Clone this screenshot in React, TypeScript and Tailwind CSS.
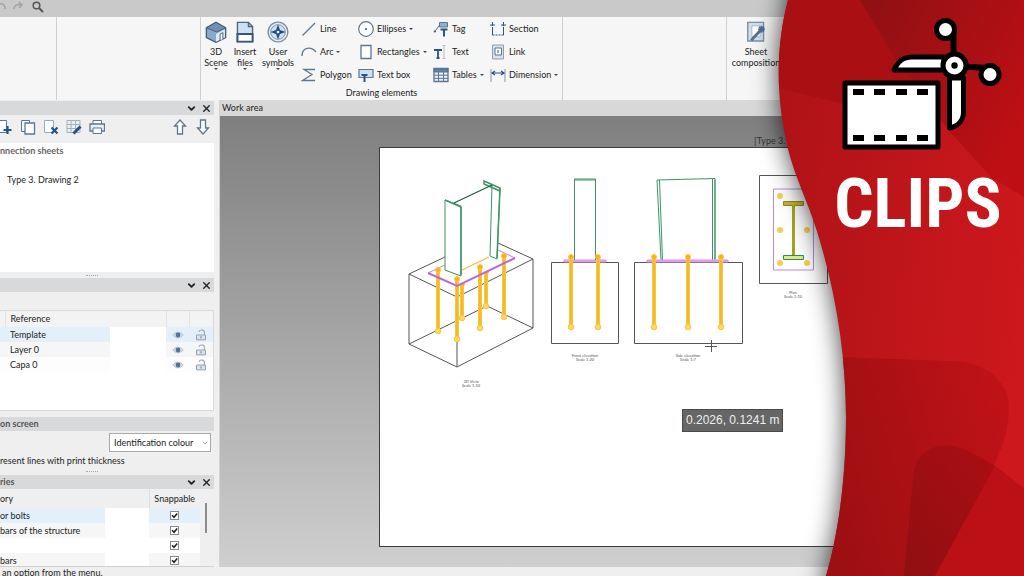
import { useState } from 'react';
import type { ReactNode } from 'react';
import { ChevronDown, X } from 'lucide-react';

const INK = '#5b7793';
const NAVY = '#24548a';
const PALE = '#cfe0f0';

function Glyph({ children, className = 'size-4' }: { children: ReactNode; className?: string }) {
  return (
    <svg viewBox="0 0 16 16" fill="none" stroke={INK} className={`shrink-0 ${className}`} aria-hidden="true">
      {children}
    </svg>
  );
}

const icons = {
  scene: (
    <Glyph className="size-[22px]">
      <path d="M1 5 8 1l7 4v7l-7 3.500L1 12Z" fill="#87a9cf" stroke="#4a5e75" />
      <path d="M1 5 8 1l7 4-6.500 3Z" fill="#6f8fb3" stroke="#4a5e75" strokeWidth=".7" />
      <path d="M8 9.500 14.500 6v6L8 15Z" fill="#dfeaf5" stroke="none" />
      <path d="M11 14V9.500l2-1V13" fill="#fff" stroke="#4a5e75" strokeWidth=".7" />
    </Glyph>
  ),
  insert: (
    <Glyph className="size-[22px]">
      <path d="M2.500 1h8l3 3v11h-11Z" fill={PALE} stroke="#50647b" />
      <path d="M10.500 1v3h3" stroke="#50647b" />
      <path d="M2.500 9.500h11V15h-11Z" fill="#fff" stroke="#34567e" strokeWidth="1.400" />
    </Glyph>
  ),
  symbols: (
    <Glyph className="size-[22px]">
      <circle cx="8" cy="8" r="7.200" fill="#e3ebf3" stroke="#7f92a6" />
      <circle cx="8" cy="8" r="5.300" fill={PALE} stroke="#7f92a6" strokeWidth=".7" />
      <path d="M8 2.500 9.400 6.600 13.500 8 9.400 9.400 8 13.500 6.600 9.400 2.500 8l4.100-1.400Z" fill="#1d4c82" stroke="none" />
      <circle cx="8" cy="8" r="1" fill="#fff" stroke="none" />
    </Glyph>
  ),
  line: <Glyph><path d="M1.500 14.500 14 2" strokeWidth="1.200" /></Glyph>,
  arc: <Glyph><path d="M1 12C1 3 10 2 15 8" strokeWidth="1.300" /></Glyph>,
  polygon: <Glyph><path d="M14 2.500H3l8 5-9.500 6H14" strokeWidth="1.300" /></Glyph>,
  ellipse: (
    <Glyph>
      <circle cx="8" cy="8" r="7.300" fill="#fff" strokeWidth="1.200" />
      <circle cx="8" cy="8" r="1" fill={NAVY} stroke="none" />
    </Glyph>
  ),
  rectangle: <Glyph><path d="M3 1.500h10v13H3Z" fill="#fff" strokeWidth="1.300" /></Glyph>,
  textbox: (
    <Glyph>
      <path d="M1 2.500h14v8H1Z" fill={PALE} strokeWidth="1.200" />
      <path d="M3.500 8h6M6.500 8v7" stroke={NAVY} strokeWidth="2" />
    </Glyph>
  ),
  tag: (
    <Glyph>
      <path d="M6.500 1.500h8v4.500h-8Z" fill="#8db1d8" />
      <path d="M6.500 4 1.500 11" />
      <circle cx="1.800" cy="10.500" r="1.100" fill={NAVY} stroke="none" />
      <path d="M7.500 8.500h7M11 8.500V15.500" stroke={NAVY} strokeWidth="2" />
    </Glyph>
  ),
  text: (
    <Glyph>
      <path d="M1 6h8M5 6v8M3.500 14h3" stroke={NAVY} strokeWidth="1.800" />
      <path d="M9.500 1.500h3M11 1.500v13M9.500 14.500h3" stroke="#a3b1bf" strokeWidth=".8" />
    </Glyph>
  ),
  table: (
    <Glyph>
      <path d="M1 1.500h14v13H1Z" fill="#e6eff8" strokeWidth="1.300" />
      <path d="M1 1.500h14V5H1Z" fill={NAVY} fillOpacity=".7" />
      <path d="M5.500 5v9.500M10.500 5v9.500M1 8.200h14M1 11.400h14" />
    </Glyph>
  ),
  section: (
    <Glyph>
      <path d="M2.500 6v8M13.500 6v8" stroke={NAVY} />
      <path d="M2.500 14h11" stroke={NAVY} strokeDasharray="2 1" />
      <path d="M0 4h2M3 4h2M11 4h2M14 4h2M2.500 1v4M13.500 1v4" stroke={NAVY} />
    </Glyph>
  ),
  link: (
    <Glyph>
      <path d="M2.500 1h11v14h-11Z" fill="#d9e0e8" stroke="#8fa0b2" />
      <path d="M5 4h6.500v7H5Z" fill="#fff" />
      <path d="M8 6v3" stroke={NAVY} />
    </Glyph>
  ),
  dimension: (
    <Glyph>
      <path d="M1 2v13M15 2v13" stroke="#8395a8" />
      <path d="M2 6h12M5 4 2 6l3 2M11 4l3 2-3 2" stroke={NAVY} strokeWidth="1.200" />
    </Glyph>
  ),
  sheet: (
    <Glyph className="size-[22px]">
      <path d="M2 1h11.500v13.500H2Z" fill="#d5dde6" stroke="#7b8fa5" />
      <path d="M5 3.500h6v8H5Z" fill="#fff" stroke="#a9b8c8" strokeWidth=".7" />
      <path d="m4.500 14 7-7.500" stroke="#4f6f94" strokeWidth="2" />
      <path d="M12 3.500v5M9.500 6h5M10.200 4.200l3.600 3.600M13.800 4.200l-3.600 3.600" stroke="#4f6f94" strokeWidth="1.200" />
    </Glyph>
  ),
  add: (
    <Glyph>
      <path d="M-3 1.500H9.500v12H-3Z" fill="#fff" />
      <path d="M10.500 7v8M6.500 11h8" stroke={NAVY} strokeWidth="2.200" />
    </Glyph>
  ),
  copy: (
    <Glyph>
      <path d="M1.500 1.500h8v11h-8Z" fill="#fff" />
      <path d="M5 4h9.500v11H5Z" fill="#fff" strokeWidth="1.300" />
    </Glyph>
  ),
  remove: (
    <Glyph>
      <path d="M1.500 1.500h9v12h-9Z" fill="#fff" stroke="#9aabbc" />
      <path d="m8.500 8.500 6 6M14.500 8.500l-6 6" stroke={NAVY} strokeWidth="2.200" />
    </Glyph>
  ),
  edit: (
    <Glyph>
      <path d="M1 1.500h13v12H1ZM5 1.500v12M9.500 1.500v12M1 5.500h13M1 9.500h13" stroke="#9eb0c2" />
      <path d="m7.500 14.500 7-7" stroke={NAVY} strokeWidth="3" />
    </Glyph>
  ),
  print: (
    <Glyph>
      <path d="M4 5V1.500h8.500V5" fill="#fff" />
      <path d="M1 5h14.500v7H1Z" fill="#e9eff5" strokeWidth="1.300" />
      <path d="M4 9h8.500v5.500H4Z" fill="#fff" />
    </Glyph>
  ),
  up: <Glyph><path d="m8 1 5.500 6h-3v8h-5V7h-3Z" fill="#fff" strokeWidth="1.300" /></Glyph>,
  down: <Glyph><path d="m8 15 5.500-6h-3V1h-5v8h-3Z" fill="#fff" strokeWidth="1.300" /></Glyph>,
  eye: (
    <Glyph className="h-3 w-3">
      <path d="M1 8c4-5 10-5 14 0-4 5-10 5-14 0Z" fill="#d5e0eb" stroke="#a4b5c6" />
      <circle cx="8" cy="8" r="3.200" fill="#567395" stroke="none" />
    </Glyph>
  ),
  lock: (
    <Glyph className="h-3 w-3">
      <path d="M5 3.500C7 .5 12.500.5 12.500 4v4" stroke="#92a1b1" strokeWidth="1.400" />
      <path d="M2 8h12v6.500H2Z" fill="#dbe2ea" stroke="#92a1b1" strokeWidth="1.300" />
      <path d="M8 9.500v3" stroke="#92a1b1" strokeWidth="2" />
    </Glyph>
  ),
};

type IconName = keyof typeof icons;

const tools: { icon: IconName; label: string; menu?: boolean }[][] = [
  [{ icon: 'line', label: 'Line' }, { icon: 'arc', label: 'Arc', menu: true }, { icon: 'polygon', label: 'Polygon' }],
  [{ icon: 'ellipse', label: 'Ellipses', menu: true }, { icon: 'rectangle', label: 'Rectangles', menu: true }, { icon: 'textbox', label: 'Text box' }],
  [{ icon: 'tag', label: 'Tag' }, { icon: 'text', label: 'Text' }, { icon: 'table', label: 'Tables', menu: true }],
  [{ icon: 'section', label: 'Section' }, { icon: 'link', label: 'Link' }, { icon: 'dimension', label: 'Dimension', menu: true }],
];

const layers = [
  { name: 'Template', row: 'bg-[#e3f0fc]' },
  { name: 'Layer 0', row: 'bg-[#f6f6f7]' },
  { name: 'Capa 0', row: 'bg-[#fdfdfd]' },
];

const categories = [
  { name: 'or bolts', row: 'bg-[#e3f0fc]' },
  { name: 'bars of the structure', row: 'bg-[#f6f6f7]' },
  { name: '', row: 'bg-white' },
  { name: 'bars', row: 'bg-[#f6f6f7]' },
];

function Caret() {
  return <span className="h-0 w-0 border-x-2 border-t-2 border-x-transparent border-t-[#444]" />;
}

function BigButton({ icon, lines, menu, className }: { icon: IconName; lines: string[]; menu?: boolean; className: string }) {
  return (
    <button className={`flex flex-col items-center ${className}`}>
      {icons[icon]}
      <span className="mt-[3px] flex flex-col items-center leading-[11px] whitespace-nowrap">
        {lines.map((l) => <span key={l}>{l}</span>)}
      </span>
      {menu && <Caret />}
    </button>
  );
}

function Ribbon() {
  return (
    <div className="flex h-[83px] shrink-0 bg-[#f6f6f6]">
      <div className="w-[57px] border-r border-[#cfcfd2]" />
      <div className="w-36 border-r border-[#cfcfd2]" />
      <div className="flex w-[362px] flex-col border-r border-[#cfcfd2] pt-[2px]">
        <div className="flex">
          <div className="flex w-[100px] pt-[2px] pl-px">
            <BigButton icon="scene" lines={['3D', 'Scene']} menu className="w-7" />
            <BigButton icon="insert" lines={['Insert', 'files']} menu className="w-[30px]" />
            <BigButton icon="symbols" lines={['User', 'symbols']} menu className="w-9" />
          </div>
          <div className="grid grid-cols-[57px_75px_57px_72px]">
            {tools.map((col, i) => (
              <div key={i} className="flex flex-col">
                {col.map((t) => (
                  <button key={t.label} className="flex h-[23px] items-center gap-[3px] pb-1 whitespace-nowrap">
                    {icons[t.icon]}
                    <span>{t.label}</span>
                    {t.menu && <Caret />}
                  </button>
                ))}
              </div>
            ))}
          </div>
        </div>
        <div className="text-center leading-[10px]">Drawing elements</div>
      </div>
      <div className="w-[164px] border-r border-[#cfcfd2]" />
      <div className="pt-1">
        <BigButton icon="sheet" lines={['Sheet', 'composition']} className="w-[58px]" />
      </div>
    </div>
  );
}

function PanelHeader({ title, controls = true }: { title?: string; controls?: boolean }) {
  return (
    <div className="flex h-[14px] shrink-0 items-center bg-[#d8d9db] pr-[2px]">
      <h2 className="flex-1 font-bold text-[#555]">{title}</h2>
      {controls && (
        <div className="flex gap-1 text-[#222]">
          <button aria-label="Collapse"><ChevronDown className="size-[11px]" strokeWidth={4} /></button>
          <button aria-label="Close"><X className="size-[11px]" strokeWidth={3} /></button>
        </div>
      )}
    </div>
  );
}

function Grip() {
  return <div className="mr-[116px] ml-auto w-3 border-t border-dotted border-[#a8a8a8]" />;
}

function SnapBox({ label }: { label: string }) {
  const [on, setOn] = useState(true);
  return (
    <label className="mx-auto grid size-[9px] place-items-center">
      <input
        type="checkbox"
        aria-label={label}
        checked={on}
        onChange={() => setOn(!on)}
        className="col-start-1 row-start-1 size-[9px] appearance-none border border-[#8a8a8a] bg-white"
      />
      {on && (
        <svg viewBox="0 0 9 9" className="pointer-events-none col-start-1 row-start-1 size-[9px]" fill="none" stroke="#222" strokeWidth="1.600">
          <path d="m2 4.300 2 2L7.200 2.500" />
        </svg>
      )}
    </label>
  );
}

function Sidebar() {
  const toolbar: IconName[] = ['add', 'copy', 'remove', 'edit', 'print'];
  return (
    <aside className="flex w-[220px] shrink-0 flex-col overflow-hidden border-r border-[#d3d3d3] bg-[#efefef] pt-px pr-[5px]">
      <PanelHeader />
      <div className="flex h-7 shrink-0 items-center justify-between pr-[3px] pb-1">
        <div className="-ml-[3px] flex gap-[7px]">
          {toolbar.map((name) => <button key={name} aria-label={name}>{icons[name]}</button>)}
        </div>
        <div className="flex gap-[7px]">
          <button aria-label="Move up">{icons.up}</button>
          <button aria-label="Move down">{icons.down}</button>
        </div>
      </div>
      <div className="h-[129px] shrink-0 bg-white pt-[2px]">
        <div className="font-bold text-[#666]">nnection sheets</div>
        <div className="mt-[17px] pl-[7px]">Type 3. Drawing 2</div>
      </div>
      <div className="flex h-[6px] shrink-0 items-center"><Grip /></div>
      <PanelHeader />

      <div className="mt-[18px] h-[101px] shrink-0 border border-l-0 border-[#d9d9d9] bg-white">
        <table className="w-full table-fixed border-collapse text-left">
          <thead>
            <tr className="h-4 bg-[#f3f3f3]">
              <th className="w-[5px] border-r border-[#e2e2e2]" />
              <th className="w-[105px] pl-[5px] font-normal">Reference</th>
              <th />
              <th className="w-[23px] border-x border-[#e2e2e2]" />
              <th className="w-6" />
            </tr>
          </thead>
          <tbody>
            {layers.map((l) => (
              <tr key={l.name} className="h-[15px]">
                <td className={l.row} />
                <td className={`pl-[5px] ${l.row}`}>{l.name}</td>
                <td />
                <td className={l.row}><button className="mx-auto block" aria-label={`Show ${l.name}`}>{icons.eye}</button></td>
                <td className={l.row}><button className="mx-auto block" aria-label={`Lock ${l.name}`}>{icons.lock}</button></td>
              </tr>
            ))}
          </tbody>
        </table>
      </div>

      <div className="mt-[6px] flex flex-col">
        <PanelHeader title="on screen" controls={false} />
        <div className="mt-[2px] flex justify-end pr-[3px]">
          <div className="grid w-[102px] items-center">
            <select
              aria-label="Colour mode"
              className="col-start-1 row-start-1 h-[19px] appearance-none border border-[#a9a9a9] bg-white pl-1"
            >
              <option>Identification colour</option>
            </select>
            <ChevronDown className="pointer-events-none col-start-1 row-start-1 mr-[2px] size-2 justify-self-end text-[#777]" />
          </div>
        </div>
        <div className="pt-[3px]">resent lines with print thickness</div>
        <div className="flex h-2 items-center"><Grip /></div>
      </div>

      <PanelHeader title="ries" />
      <div className="flex min-h-0 flex-1 overflow-hidden border-b border-[#d0d0d0]">
        <table className="h-max w-[200px] table-fixed border-collapse text-left">
          <thead>
            <tr className="h-[19px]">
              <th className="w-[105px] font-normal">ory</th>
              <th />
              <th className="w-[51px] border-l border-[#dedede] text-center font-normal">Snappable</th>
            </tr>
          </thead>
          <tbody>
            {categories.map((c, i) => (
              <tr key={i} className="h-[15px]">
                <td className={`whitespace-nowrap ${c.row}`}>{c.name}</td>
                <td className="bg-white" />
                <td className={c.row}><SnapBox label={`Snappable ${c.name}`} /></td>
              </tr>
            ))}
          </tbody>
        </table>
        <div className="mt-[14px] ml-[5px] h-[30px] w-[2px] bg-[#8c8c8c]" />
      </div>
    </aside>
  );
}

function Bolt({ x, top, bottom }: { x: number; top: number; bottom: number }) {
  return (
    <g stroke="#fcc63a">
      <path d={`M${x} ${top}V${bottom}`} strokeWidth="4" />
      <path d={`M${x} ${top}V${bottom}`} stroke="#e9ac24" strokeWidth="1" />
      <circle cx={x} cy={top} r="2.500" fill="#f5b21a" />
      <circle cx={x} cy={bottom} r="2.800" fill="#fcd765" />
    </g>
  );
}

function ViewLabel({ x, y, title, scale }: { x: number; y: number; title: string; scale: string }) {
  return (
    <text x={x} y={y} textAnchor="middle" fontSize="4" fill="#555" stroke="none">
      {title}
      <tspan x={x} dy="4">{scale}</tspan>
    </text>
  );
}

function Drawing() {
  return (
    <svg viewBox="380 148 460 400" className="h-[400px] w-[460px] shrink-0" fill="none">
      {/* 3D view */}
      <path d="M445 257 409 274v70l48 23 76-39v-69l-35-16M409 274l48 23 76-38M457 297v70M409 344l78-38 46 22" stroke="#555" />
      <Bolt x={486} top={272} bottom={306} />
      <Bolt x={462} top={284} bottom={318} />
      <path d="M428 273 445 265 498 250 515 258 457 286Z" fill="#fff" />
      <path d="M445 265l-17 8M498 250l17 8" stroke="#c27fe0" />
      <Bolt x={438} top={270} bottom={331} />
      <Bolt x={504} top={256} bottom={317} />
      <Bolt x={480} top={267} bottom={328} />
      <Bolt x={457} top={279} bottom={339} />
      <path d="M428 273 457 286 515 258" stroke="#b968dc" strokeWidth="2" />
      <path d="M453 203 492 185v71l-31 20Z" fill="#fff" />
      <path d="m445 270 16 6M462 270l27-13" stroke="#f5b93c" strokeWidth="1.300" />
      <path d="M445 200v70l16 6v-70ZM492 185l-2 71 7 3 3-71" fill="#fff" stroke="#3d9468" />
      <path d="m445 200 16 7M484 181l16 7v3l-16-7ZM461 207v68M500 188l-3 70" stroke="#3d9468" strokeWidth="1.500" />
      <path d="m454 203 38-18" stroke="#205c40" strokeWidth="1.300" />
      <ViewLabel x={471} y={383} title="3D View" scale="Scale 1:10" />

      {/* front elevation */}
      <path d="M551.500 262.500h67v81h-67Z" stroke="#555" />
      <path d="M564 262v-2h42v2Z" fill="#eba9f2" stroke="#d98ee6" />
      <path d="M574.500 260v-81h21v81M574.500 180h21" stroke="#3d9468" />
      <Bolt x={571} top={257} bottom={327} />
      <Bolt x={598} top={257} bottom={327} />
      <ViewLabel x={585} y={357} title="Front elevation" scale="Scale 1:20" />

      {/* side elevation */}
      <path d="M634.500 262.500h108v81h-108Z" stroke="#555" />
      <path d="m657 180 58-1.500v81M657 180l4 80M715 180v80M659.500 180l3 80M712.500 179v81" stroke="#3d9468" />
      <path d="M647 262v-2h81v2Z" fill="#eba9f2" stroke="#d98ee6" />
      <Bolt x={654} top={257} bottom={327} />
      <Bolt x={688} top={257} bottom={327} />
      <Bolt x={721} top={257} bottom={327} />
      <ViewLabel x={688} y={357} title="Side elevation" scale="Scale 1:7" />
      <path d="M705 346.500h12M711.500 340v12" stroke="#555" />

      {/* plan */}
      <path d="M759.500 175.500h68v108h-68Z" stroke="#555" />
      <path d="M773.500 189h40v81h-40Z" stroke="#b78be0" />
      <g fill="#f3cf57">
        {[[780, 196], [780, 230], [780, 263], [807, 230], [807, 263]].map(([cx, cy]) => (
          <circle key={`${cx}-${cy}`} cx={cx} cy={cy} r="3" />
        ))}
      </g>
      <path d="M783.500 201.500h20v4h-20Z" fill="#c9b42c" stroke="#8b8a28" />
      <path d="M783.500 255.500h20v4h-20Z" fill="#e9e48a" stroke="#2f8a5b" />
      <path d="M793.500 205v50" stroke="#a9a21f" strokeWidth="3" />
      <ViewLabel x={793} y={294} title="Plan" scale="Scale 1:10" />
    </svg>
  );
}

function WorkArea() {
  return (
    <main className="flex min-w-0 flex-1 flex-col">
      <h1 className="h-4 shrink-0 bg-[#d8d8d8] pl-[2px] leading-4">Work area</h1>
      <div className="relative flex-1 overflow-hidden bg-linear-to-b from-[#7f7f7f] to-[#cfcfcf] pt-[19px] pl-[159px]">
        <div className="pl-[375px] whitespace-nowrap text-[#333]">[Type 3. Drawing 2]</div>
        <div className="flex h-[400px] border border-r-0 border-[#3d3d3d] bg-white">
          <Drawing />
        </div>
        <div className="absolute top-[293px] left-[462px] border border-[#4a4a4a] bg-[#666] px-[3px] py-[3px] font-['Liberation_Sans',sans-serif] text-[12px] leading-[15px] whitespace-nowrap text-[#eee]">
          0.2026, 0.1241 m
        </div>
      </div>
    </main>
  );
}

const EDGE = 'M788 0C776 45 776 95 786 140C793 176 811 206 821 245C837 300 846 360 846 417C846 480 838 535 826 576';

function ClipsBanner() {
  return (
    <section className="absolute inset-y-0 right-0 flex w-[284px] flex-col pt-4 pl-[94px]">
      <svg viewBox="740 0 284 576" preserveAspectRatio="none" className="absolute inset-0 h-full w-full" aria-hidden="true">
        <defs>
          <linearGradient id="base" x1="0" x2="1" y1=".3" y2=".5">
            <stop offset="0" stopColor="#ab1216" />
            <stop offset="1" stopColor="#cd181d" />
          </linearGradient>
          <linearGradient id="wedge" x1="0" x2="1" y1="0" y2=".6">
            <stop offset="0" stopColor="#8d1013" />
            <stop offset="1" stopColor="#bd0f14" />
          </linearGradient>
          <linearGradient id="leaf" x1="0" x2="1" y1=".6" y2=".3">
            <stop offset="0" stopColor="#9c0f12" />
            <stop offset="1" stopColor="#bf1217" />
          </linearGradient>
          <linearGradient id="core" x1="0" x2="1" y1="1" y2="0">
            <stop offset="0" stopColor="#900f12" />
            <stop offset="1" stopColor="#ab0e12" />
          </linearGradient>
          <filter id="soft" x="-30%" y="-10%" width="160%" height="120%"><feGaussianBlur stdDeviation="13" /></filter>
          <clipPath id="panel"><path d={`${EDGE}H1024V0Z`} /></clipPath>
        </defs>
        <path d={`${EDGE}V640H1100V-60H788Z`} fill="#000" fillOpacity=".75" filter="url(#soft)" />
        <g clipPath="url(#panel)">
          <path d="M740 0h284v576H740Z" fill="url(#base)" />
          <path d="M770 86 840 103 930 110 860 0H770Z" fill="#a90f13" />
          <path d="M860 0h164v197l-32-19-42-46-57-77Z" fill="url(#wedge)" />
          <path d="M840 357l110 4c38 0 59 22 59 46 0 19-6 40-14 56l-60 113H820Z" fill="url(#leaf)" />
          <path d="M995 466l29 22v88h-89Z" fill="#bb1015" />
          <path d="M904 576l9-98c3-34 33-38 56-27l26 15-60 110Z" fill="url(#core)" />
        </g>
      </svg>
      <svg viewBox="834 16 176 144" className="relative h-36 w-44" role="img" aria-label="Film strip and scissors">
        <path d="M845 83h93v64h-93Z" fill="#fff" stroke="#000" strokeWidth="5" strokeLinejoin="round" />
        <path d="M853 89h11v6h-11ZM874 89h11v6h-11ZM896 89h11v6h-11ZM917 89h11v6h-11ZM853 135h11v6h-11ZM874 135h11v6h-11ZM896 135h11v6h-11ZM917 135h11v6h-11Z" />
        <path d="M953.500 60V30M955 66l32 2" stroke="#000" strokeWidth="6" fill="none" />
        <g fill="#fff" stroke="#000" strokeWidth="5" strokeLinejoin="round">
          <path d="M894 70c4-9 9-13 18-13h32v13Z" />
          <path d="M949.500 78h14v34c0 8-5 14-14 16Z" />
          <circle cx="954.500" cy="65.500" r="11.500" />
          <circle cx="945.500" cy="29.500" r="9" />
          <circle cx="990" cy="74.500" r="9" />
        </g>
        <circle cx="954.500" cy="65.500" r="3.200" />
      </svg>
      <p className="relative w-[168px] text-center font-['Roboto_Condensed','Liberation_Sans_Narrow',Roboto,sans-serif] text-[69px] leading-[88px] font-bold text-white">
        CLIPS
      </p>
    </section>
  );
}

export default function App() {
  return (
    <div className="relative flex h-screen min-h-[576px] flex-col overflow-hidden bg-[#efefef] font-[Lato,sans-serif] text-[9px] leading-3 text-[#222]">
      <header className="flex h-[17px] shrink-0 items-start gap-2 bg-[#c9c9c9]">
        <svg viewBox="0 0 46 14" className="h-[14px] w-[46px]" fill="none" stroke="#a3a3a3" strokeWidth="1.500">
          <path d="M0 4c3-1 5 1 5 5M14 9c0-4 4-5 8-4m-3-3 3 3-3 3" />
          <g stroke="#555">
            <circle cx="36.500" cy="5.500" r="3.300" />
            <path d="m39 8 4 4" strokeWidth="2" />
          </g>
        </svg>
      </header>
      <Ribbon />
      <div className="flex min-h-0 flex-1">
        <Sidebar />
        <WorkArea />
      </div>
      <footer className="h-[9px] shrink-0 overflow-hidden bg-[#efefef] pl-[2px]">an option from the menu.</footer>
      <ClipsBanner />
    </div>
  );
}
